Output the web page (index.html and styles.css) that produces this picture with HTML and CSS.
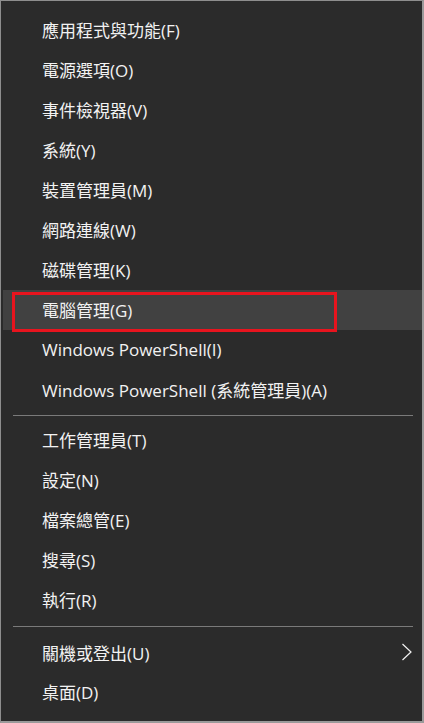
FILE: index.html
```html
<!DOCTYPE html>
<html>
<head>
    <title>Win+X Menu</title>
    <link rel="stylesheet" href="styles.css">
</head>
<body>

<div class="menu">
    <div class="item">應用程式與功能(F)</div>
    <div class="item">電源選項(O)</div>
    <div class="item">事件檢視器(V)</div>
    <div class="item">系統(Y)</div>
    <div class="item">裝置管理員(M)</div>
    <div class="item">網路連線(W)</div>
    <div class="item">磁碟管理(K)</div>
    <div class="item active">
        電腦管理(G)
        <span class="mark"></span>
    </div>
    <div class="item">Windows PowerShell(I)</div>
    <div class="item">Windows PowerShell (系統管理員)(A)</div>
    <div class="sep"></div>
    <div class="item">工作管理員(T)</div>
    <div class="item">設定(N)</div>
    <div class="item">檔案總管(E)</div>
    <div class="item">搜尋(S)</div>
    <div class="item">執行(R)</div>
    <div class="sep sep-wide"></div>
    <div class="item has-sub">
        關機或登出(U)
        <svg class="chevron" width="12" height="18" viewBox="0 0 12 18">
            <path d="M1.5 1 L10 9 L1.5 17" fill="none" stroke="#f2f2f2" stroke-width="1.2"/>
        </svg>
    </div>
    <div class="item">桌面(D)</div>
</div>

</body>
</html>
```

FILE: styles.css
```css
html, body {
    margin: 0;
    padding: 0;
}
body {
    width: 424px;
    height: 723px;
    box-sizing: border-box;
    background-color: #2b2b2b;
    border-top: 1px solid #8e8e8e;
    border-left: 1px solid #8e8e8e;
    border-right: 2px solid #9a9a9a;
    border-bottom: 2px solid #9a9a9a;
    font-family: 'Open Sans', 'Noto Sans CJK TC', sans-serif;
    color: #f2f2f2;
}
.menu {
    display: flex;
    flex-direction: column;
    padding: 9px 0 0 2px;
}
.item {
    position: relative;
    display: flex;
    align-items: center;
    height: 40px;
    padding-left: 39px;
    padding-bottom: 1px;
    box-sizing: border-box;
    font-size: 17px;
    white-space: nowrap;
}
.active {
    background-color: #414141;
}
.mark {
    position: absolute;
    left: 9px;
    top: 2px;
    width: 319px;
    height: 34px;
    border: 3px solid #e8141e;
}
.has-sub {
    justify-content: space-between;
    padding-right: 9px;
    padding-bottom: 0;
}
.sep {
    height: 10px;
    display: flex;
    align-items: center;
    padding: 0 9px 0 10px;
}
.sep::before {
    content: '';
    flex: 1;
    height: 1px;
    background-color: #7a7a7a;
}
.sep-wide {
    height: 12px;
}
```
